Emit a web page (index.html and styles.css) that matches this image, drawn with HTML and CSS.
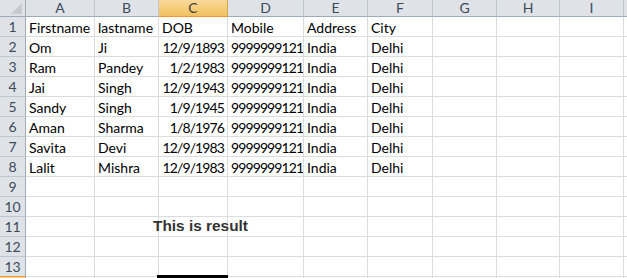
FILE: index.html
```html
<!DOCTYPE html>
<html>
<head>
<meta charset="utf-8">
<link rel="stylesheet" href="styles.css">
</head>
<body>
<div class="sheet">
  <div class="grid">
    <div class="corner"><span class="tri"></span></div>
    <div class="ch">A</div><div class="ch">B</div><div class="ch sel">C</div><div class="ch">D</div><div class="ch">E</div><div class="ch">F</div><div class="ch">G</div><div class="ch">H</div><div class="ch">I</div><div class="ch end"></div>

    <div class="rh">1</div><div class="c">Firstname</div><div class="c">lastname</div><div class="c">DOB</div><div class="c">Mobile</div><div class="c">Address</div><div class="c">City</div><div class="c"></div><div class="c"></div><div class="c"></div><div class="c end"></div>
    <div class="rh">2</div><div class="c">Om</div><div class="c">Ji</div><div class="c r">12/9/1893</div><div class="c r">9999999121</div><div class="c">India</div><div class="c">Delhi</div><div class="c"></div><div class="c"></div><div class="c"></div><div class="c end"></div>
    <div class="rh">3</div><div class="c">Ram</div><div class="c">Pandey</div><div class="c r">1/2/1983</div><div class="c r">9999999121</div><div class="c">India</div><div class="c">Delhi</div><div class="c"></div><div class="c"></div><div class="c"></div><div class="c end"></div>
    <div class="rh">4</div><div class="c">Jai</div><div class="c">Singh</div><div class="c r">12/9/1943</div><div class="c r">9999999121</div><div class="c">India</div><div class="c">Delhi</div><div class="c"></div><div class="c"></div><div class="c"></div><div class="c end"></div>
    <div class="rh">5</div><div class="c">Sandy</div><div class="c">Singh</div><div class="c r">1/9/1945</div><div class="c r">9999999121</div><div class="c">India</div><div class="c">Delhi</div><div class="c"></div><div class="c"></div><div class="c"></div><div class="c end"></div>
    <div class="rh">6</div><div class="c">Aman</div><div class="c">Sharma</div><div class="c r">1/8/1976</div><div class="c r">9999999121</div><div class="c">India</div><div class="c">Delhi</div><div class="c"></div><div class="c"></div><div class="c"></div><div class="c end"></div>
    <div class="rh">7</div><div class="c">Savita</div><div class="c">Devi</div><div class="c r">12/9/1983</div><div class="c r">9999999121</div><div class="c">India</div><div class="c">Delhi</div><div class="c"></div><div class="c"></div><div class="c"></div><div class="c end"></div>
    <div class="rh">8</div><div class="c">Lalit</div><div class="c">Mishra</div><div class="c r">12/9/1983</div><div class="c r">9999999121</div><div class="c">India</div><div class="c">Delhi</div><div class="c"></div><div class="c"></div><div class="c"></div><div class="c end"></div>
    <div class="rh">9</div><div class="c"></div><div class="c"></div><div class="c"></div><div class="c"></div><div class="c"></div><div class="c"></div><div class="c"></div><div class="c"></div><div class="c"></div><div class="c end"></div>
    <div class="rh">10</div><div class="c"></div><div class="c"></div><div class="c"></div><div class="c"></div><div class="c"></div><div class="c"></div><div class="c"></div><div class="c"></div><div class="c"></div><div class="c end"></div>
    <div class="rh">11</div><div class="c"></div><div class="c"></div><div class="c"></div><div class="c"></div><div class="c"></div><div class="c"></div><div class="c"></div><div class="c"></div><div class="c"></div><div class="c end"></div>
    <div class="rh">12</div><div class="c"></div><div class="c"></div><div class="c"></div><div class="c"></div><div class="c"></div><div class="c"></div><div class="c"></div><div class="c"></div><div class="c"></div><div class="c end"></div>
    <div class="rh rsel">13</div><div class="c"></div><div class="c"></div><div class="c"></div><div class="c"></div><div class="c"></div><div class="c"></div><div class="c"></div><div class="c"></div><div class="c"></div><div class="c end"></div>
    <div class="rh rsel14"></div><div class="c"></div><div class="c"></div><div class="c"></div><div class="c"></div><div class="c"></div><div class="c"></div><div class="c"></div><div class="c"></div><div class="c"></div><div class="c end"></div>
  </div>
  <div class="result">This is result</div>
  <div class="cursor"></div>
</div>
</body>
</html>
```

FILE: styles.css
```css
html, body {
  margin: 0;
  padding: 0;
  background: #ffffff;
  overflow: hidden;
}

.sheet {
  position: relative;
  width: 627px;
  height: 278px;
  overflow: hidden;
}

.grid {
  display: grid;
  grid-template-columns: 26px 69px 64px 69px 76px 64px 65px 64px 63px 64px 40px;
  grid-template-rows: 17px repeat(14, 20px);
  font-family: Lato, "Liberation Sans", sans-serif;
}

.grid > div {
  box-sizing: border-box;
  overflow: hidden;
  white-space: nowrap;
}

.corner {
  position: relative;
  background: #dfe3e8;
  border-right: 1px solid #9eabb9;
  border-bottom: 1px solid #9eabb9;
}

.tri {
  position: absolute;
  right: 3px;
  bottom: 2px;
  width: 0;
  height: 0;
  border-left: 11px solid transparent;
  border-bottom: 11px solid #c6cbd2;
}

.ch {
  background: #dfe3e8;
  border-right: 1px solid #c0c6ce;
  border-bottom: 1px solid #9eabb9;
  color: #3c4a5a;
  font-size: 14px;
  line-height: 16px;
  text-align: center;
}

.ch.sel {
  background: linear-gradient(#f9d99a, #f1c15f);
  border-bottom: 1px solid #f29536;
  border-right: 1px solid #d9a54b;
  color: #3c3c3c;
}

.rh {
  background: #dfe3e8;
  border-right: 1px solid #9eabb9;
  border-bottom: 1px solid #c0c6ce;
  color: #3c4a5a;
  font-size: 14px;
  line-height: 20px;
  text-align: center;
}

.rh.rsel {
  border-bottom: 1px solid #f29536;
}

.rh.rsel14 {
  background: #f8d690;
}

.c {
  border-right: 1px solid #dadcdd;
  border-bottom: 1px solid #dadcdd;
  color: #000000;
  font-size: 14px;
  line-height: 21px;
  padding: 0 2px 0 3px;
}

.c.r {
  text-align: right;
  letter-spacing: -0.9px;
  padding-right: 3px;
}

.c.end {
  border-right: none;
}

.result {
  position: absolute;
  left: 153px;
  top: 217px;
  font-family: "Liberation Sans", Arial, sans-serif;
  font-weight: bold;
  font-size: 15.4px;
  line-height: 18px;
  color: #333333;
  white-space: nowrap;
}

.cursor {
  position: absolute;
  left: 157px;
  top: 275px;
  width: 71px;
  height: 20px;
  box-sizing: border-box;
  border: 3px solid #000000;
}
```
